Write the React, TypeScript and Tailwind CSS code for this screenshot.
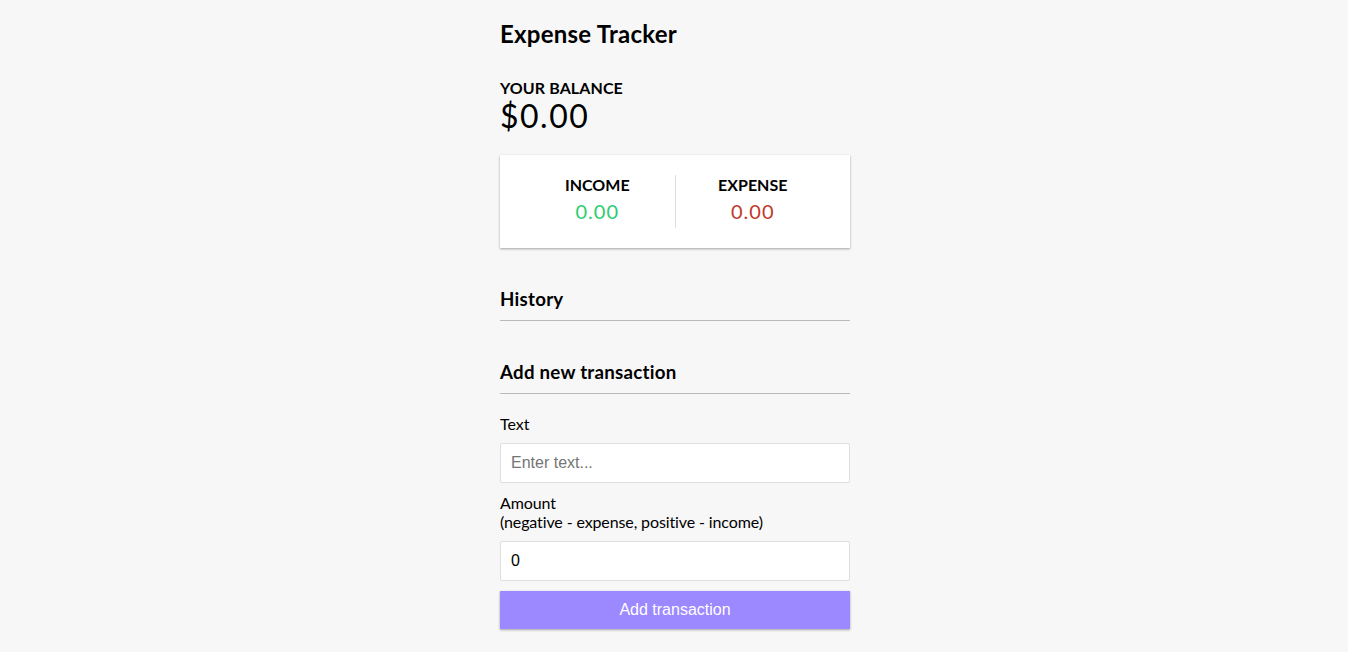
export default function App() {
  return (
    <div className="flex min-h-screen justify-center bg-[#f7f7f7] pl-[2px] font-['Lato',sans-serif] text-black">
      <div className="w-[350px] pt-[19px]">
        <h2 className="text-[24px] font-bold leading-[29px] tracking-[0.25px]">Expense Tracker</h2>

        <h4 className="mt-[30px] text-[16px] font-bold uppercase leading-[19px] tracking-[0.1px]">Your Balance</h4>
        <h1 className="text-[32px] font-normal leading-[38px] tracking-[1.5px]">$0.00</h1>

        <div className="mt-5 flex bg-white p-5 shadow-[0_1px_3px_rgba(0,0,0,0.12),0_1px_2px_rgba(0,0,0,0.24)]">
          <div className="flex-1 border-r border-[#dedede] text-center">
            <h4 className="text-[16px] font-bold uppercase leading-[19px]">Income</h4>
            <p className="my-[5px] text-[20px] leading-[24px] tracking-[1px] text-[#2ecc71]">0.00</p>
          </div>
          <div className="flex-1 text-center">
            <h4 className="text-[16px] font-bold uppercase leading-[19px]">Expense</h4>
            <p className="my-[5px] text-[20px] leading-[24px] tracking-[1px] text-[#c0392b]">0.00</p>
          </div>
        </div>

        <h3 className="mt-10 border-b border-[#bbb] pb-2.5 text-[18.72px] font-bold leading-[22px] tracking-[0.25px]">History</h3>
        <ul className="list-none p-0"></ul>

        <h3 className="mt-10 border-b border-[#bbb] pb-2.5 text-[18.72px] font-bold leading-[22px] tracking-[0.25px]">Add new transaction</h3>
        <form className="mt-2.5" onSubmit={(e) => e.preventDefault()}>
          <div>
            <label className="my-2.5 inline-block text-[16px] leading-[19px]">Text</label>
            <input
              type="text"
              placeholder="Enter text..."
              className="block w-full rounded-[2px] border border-[#dedede] bg-white p-2.5 font-['Liberation_Sans',Arial,sans-serif] text-[16px] leading-[18px] outline-none placeholder:text-[#757575]"
            />
          </div>
          <div>
            <label className="my-2.5 inline-block text-[16px] leading-[19px] tracking-[-0.12px]">
              Amount <br />
              (negative - expense, positive - income)
            </label>
            <input
              type="number"
              defaultValue={0}
              className="block w-full rounded-[2px] border border-[#dedede] bg-white p-2.5 font-['Liberation_Sans',Arial,sans-serif] text-[16px] leading-[18px] outline-none"
            />
          </div>
          <button className="mt-2.5 mb-[30px] block w-full cursor-pointer bg-[#9c88ff] p-2.5 font-['Liberation_Sans',Arial,sans-serif] text-[16px] leading-[18px] text-white shadow-[0_1px_3px_rgba(0,0,0,0.12),0_1px_2px_rgba(0,0,0,0.24)]">
            Add transaction
          </button>
        </form>
      </div>
    </div>
  );
}
